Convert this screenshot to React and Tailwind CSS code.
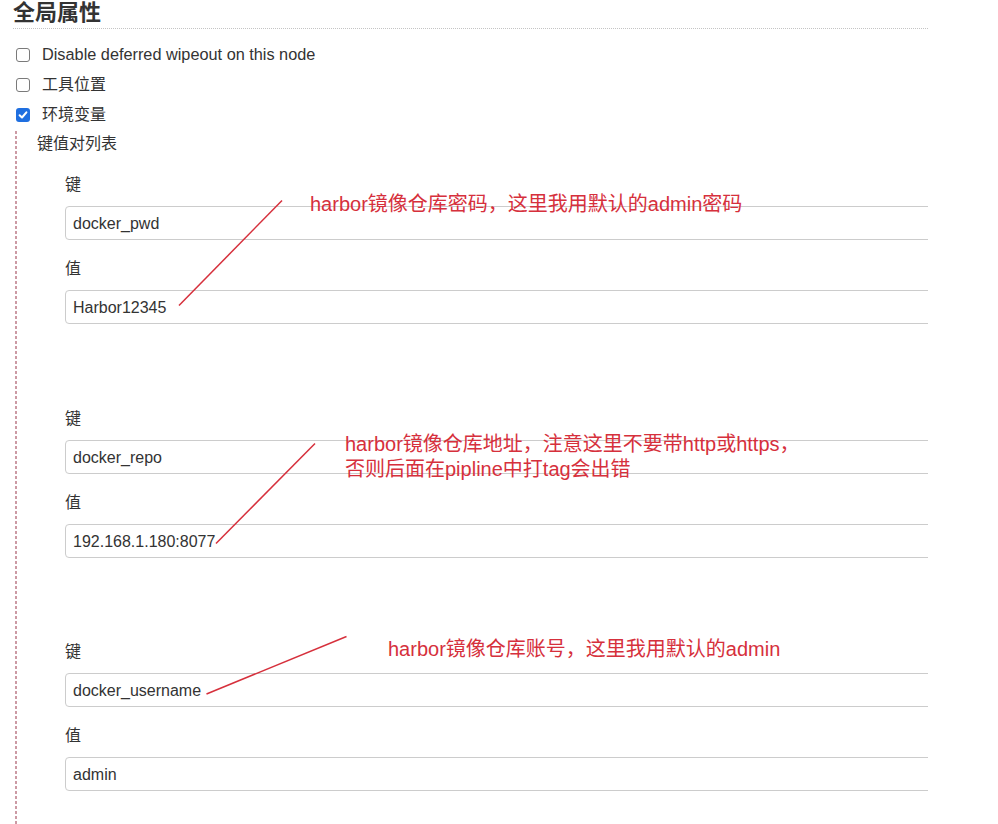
import React from "react";

function Box({ checked }) {
  if (checked) {
    return (
      <span className="flex h-[14px] w-[14px] shrink-0 items-center justify-center rounded-[3px] bg-[#1f6fe0]">
        <svg width="10" height="10" viewBox="0 0 10 10">
          <path d="M1.6 5.2 L4 7.5 L8.4 2.3" fill="none" stroke="#fff" strokeWidth="2" strokeLinecap="round" strokeLinejoin="round" />
        </svg>
      </span>
    );
  }
  return <span className="block h-[14px] w-[14px] shrink-0 rounded-[3px] border border-[#7a7a7a] bg-white" />;
}

function Field({ label, value, className }) {
  return (
    <div className={className}>
      <div className="h-[20px] text-[16px] leading-[20px]">{label}</div>
      <div className="mt-[11px] flex h-[34px] w-[900px] items-center rounded-[4px] border border-[#cccccc] bg-white pl-[7px] pt-[1px] text-[16px]">
        {value}
      </div>
    </div>
  );
}

function Pair({ k, v, className }) {
  return (
    <div className={className}>
      <Field label="键" value={k} />
      <Field label="值" value={v} className="mt-[19px]" />
    </div>
  );
}

export default function App() {
  return (
    <div className="relative h-[824px] w-[998px] overflow-hidden bg-white font-['Liberation_Sans','Noto_Sans_CJK_SC',sans-serif] text-[#333]">
      <div className="w-[928px] overflow-hidden pl-[13px]">
        <h2 className="h-[29px] border-b border-dotted border-[#c4c4c4] text-[22px] font-bold leading-[26px]">全局属性</h2>
        <div className="mt-[10px] flex flex-col">
          <div className="flex h-[30px] items-center gap-[12px] pl-[3px] pt-[1px] text-[16.3px]">
            <Box />
            <span>Disable deferred wipeout on this node</span>
          </div>
          <div className="flex h-[30px] items-center gap-[12px] pl-[3px] pt-[1px] text-[16px]">
            <Box />
            <span>工具位置</span>
          </div>
          <div className="flex h-[30px] items-center gap-[12px] pl-[3px] pt-[1px] text-[16px]">
            <Box checked />
            <span>环境变量</span>
          </div>
        </div>
        <div className="mt-[2px] flex">
          <div className="ml-[2px] w-[2px] shrink-0 self-stretch bg-[image:repeating-linear-gradient(to_bottom,#cc9aa4_0px,#cc9aa4_3px,transparent_3px,transparent_5px)]" />
          <div className="min-w-0 flex-1 pb-[40px] pl-[20px] pt-[3px]">
            <div className="h-[20px] text-[16px] leading-[20px]">键值对列表</div>
            <div className="ml-[28px]">
              <Pair k="docker_pwd" v="Harbor12345" className="mt-[21px]" />
              <Pair k="docker_repo" v="192.168.1.180:8077" className="mt-[85px]" />
              <Pair k="docker_username" v="admin" className="mt-[84px]" />
            </div>
          </div>
        </div>
      </div>

      <svg className="pointer-events-none absolute inset-0" width="998" height="824">
        <line x1="282" y1="200.5" x2="179" y2="305.5" stroke="#d6303c" strokeWidth="1.5" />
        <line x1="315" y1="443.5" x2="216" y2="543.5" stroke="#d6303c" strokeWidth="1.5" />
        <line x1="346.5" y1="636.5" x2="206.5" y2="694" stroke="#d6303c" strokeWidth="1.5" />
      </svg>

      <div className="absolute left-[310px] top-[192px] whitespace-nowrap text-[20px] leading-[25px] text-[#d6303c]">
        harbor镜像仓库密码，这里我用默认的admin密码
      </div>
      <div className="absolute left-[345px] top-[432px] whitespace-nowrap text-[20px] leading-[25px] text-[#d6303c]">
        harbor镜像仓库地址，注意这里不要带http或https，
        <br />
        否则后面在pipline中打tag会出错
      </div>
      <div className="absolute left-[388px] top-[637px] whitespace-nowrap text-[20px] leading-[25px] text-[#d6303c]">
        harbor镜像仓库账号，这里我用默认的admin
      </div>
    </div>
  );
}
